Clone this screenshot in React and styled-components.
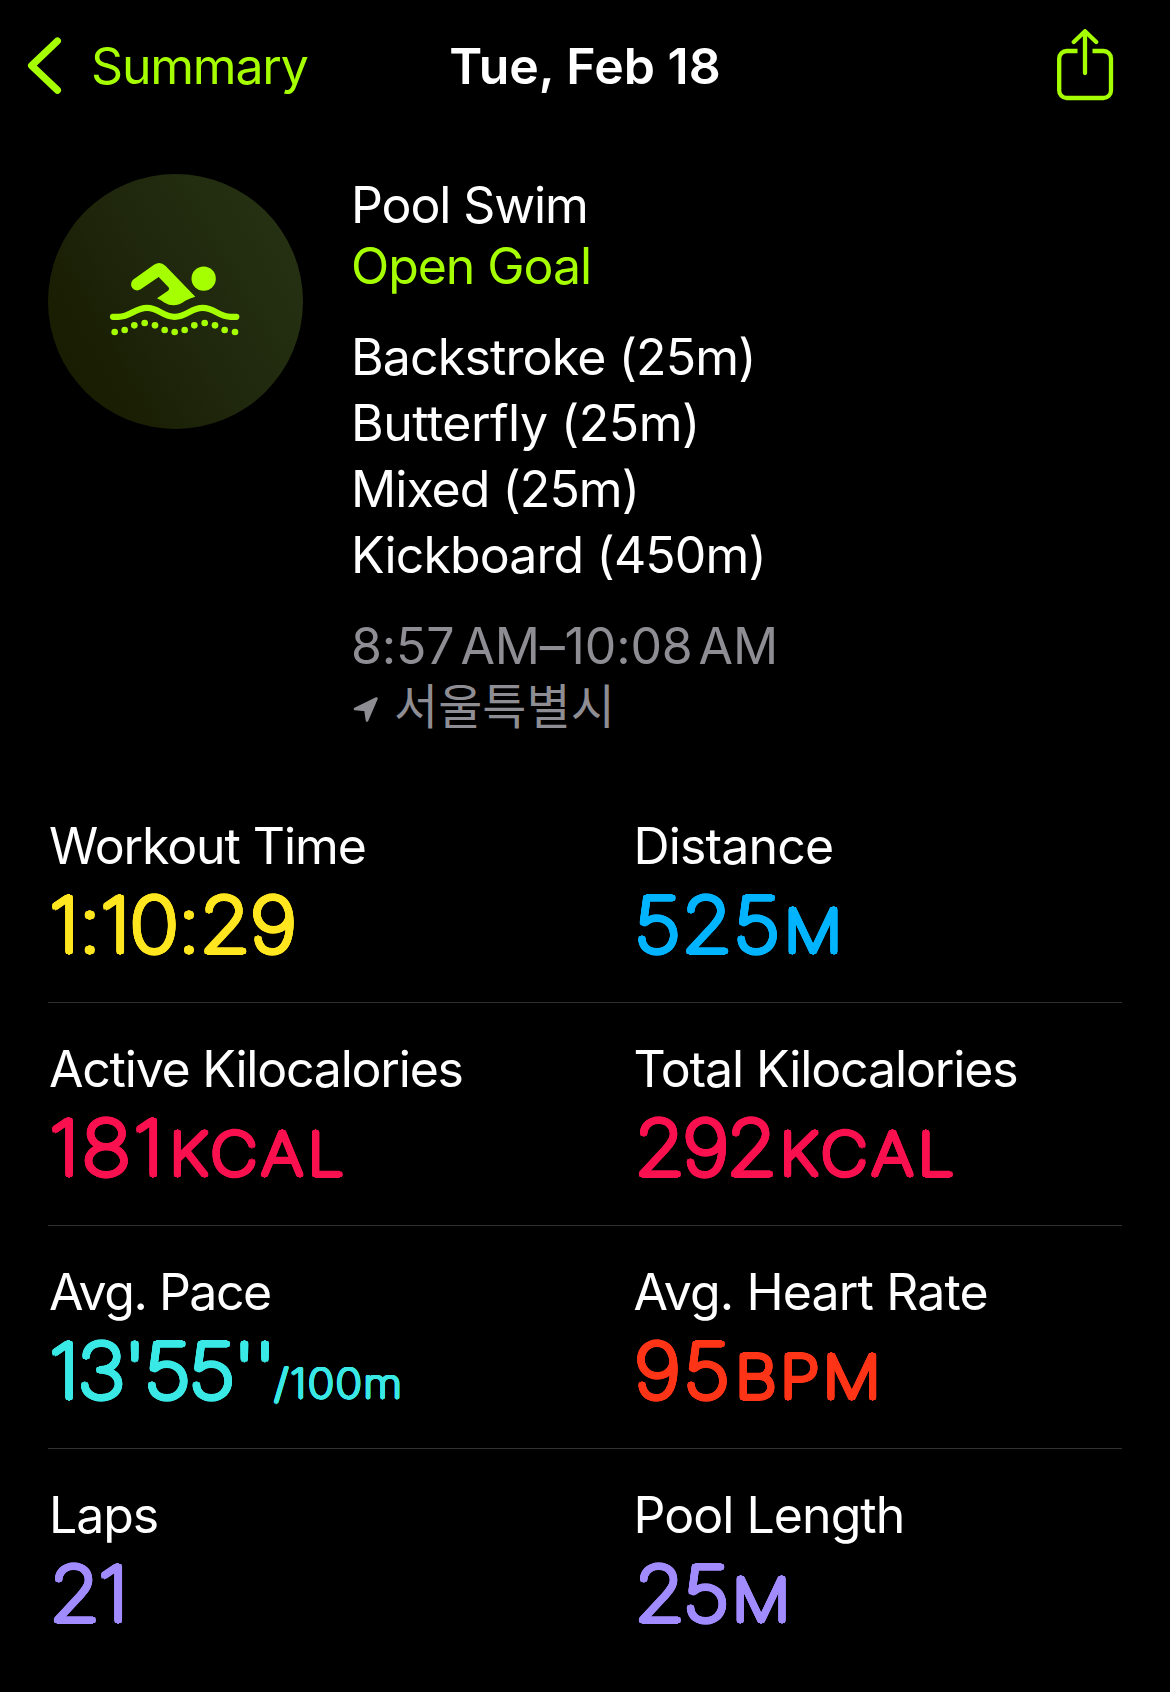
import React from 'react';
import styled, { createGlobalStyle } from 'styled-components';

const GlobalStyle = createGlobalStyle`
  * {
    box-sizing: border-box;
  }
  body {
    margin: 0;
    background-color: #000;
    color: #fff;
    font-family: Inter, 'Noto Sans CJK KR', sans-serif;
    font-size: 50px;
  }
`;

// thickens a hairline weight with a round brush, so the stroke ends come out rounded
const roundStroke = (r) => {
  const ring = (radius, count) =>
    Array.from({ length: count }, (_, i) => {
      const a = (i / count) * Math.PI * 2;
      return `${(Math.cos(a) * radius).toFixed(2)}px ${(Math.sin(a) * radius).toFixed(2)}px 0 currentColor`;
    });
  return [...ring(r, 20), ...ring(r / 2, 8)].join(', ');
};

const Screen = styled.main`
  width: 1170px;
  height: 1692px;
  overflow: hidden;
  background-color: #000;
`;

const Header = styled.header`
  display: grid;
  grid-template-columns: 1fr auto 1fr;
  align-items: center;
  height: 132px;
  padding: 0 56px;
  line-height: 60px;
`;
const BackButton = styled.button`
  display: flex;
  align-items: center;
  gap: 27px;
  margin-left: -30px;
  padding: 0;
  border: none;
  background-color: transparent;
  color: #a6ff00;
  font: inherit;
  letter-spacing: -1.2px;
`;
const Title = styled.h1`
  margin: 0;
  font-size: 50px;
  font-weight: 600;
`;
const ShareButton = styled.button`
  justify-self: end;
  display: flex;
  padding: 0;
  border: none;
  background-color: transparent;
  color: #a6ff00;
`;

const Workout = styled.section`
  display: flex;
  gap: 48px;
  height: 648px;
  padding: 42px 48px 0;
`;
const Badge = styled.div`
  width: 255px;
  height: 255px;
  border-radius: 50%;
  background: linear-gradient(60deg, #181b00 8%, #1f270c 50%, #263213 92%);
  color: #a6ff00;
`;
const Info = styled.div`
  padding-top: 1px;
  line-height: 61px;
`;
const Line = styled.div`
  color: ${(props) => props.$color || '#fff'};
  letter-spacing: ${(props) => props.$track}px;
  white-space: pre;
`;
const Meridiem = styled.span`
  margin-left: -3px;
`;
const Strokes = styled.div`
  margin: 27px 0 28px;
  line-height: 66px;
`;
const Place = styled.div`
  display: flex;
  align-items: center;
  gap: 15px;
  padding-left: 2px;
  color: #8e8d93;
  font-size: 48px;
  line-height: 59px;
  svg {
    margin-top: 5px;
  }
`;

const Stats = styled.section`
  padding: 0 48px;
`;
const StatRow = styled.div`
  display: grid;
  grid-template-columns: 584.5px 1fr;
  padding: 36px 0 33px 1px;
  & + & {
    border-top: 1px solid #303032;
  }
`;
const Label = styled.div`
  line-height: 60px;
  letter-spacing: ${(props) => props.$track}px;
`;
const Value = styled.div`
  margin-top: 5px;
  color: ${(props) => props.$color};
  font-size: 75.4px;
  font-weight: 100;
  line-height: 88px;
  letter-spacing: ${(props) => props.$track}px;
  text-shadow: ${roundStroke(2.6)};
  transform: scaleX(1.1);
  transform-origin: left;
  white-space: nowrap;
`;
const Unit = styled.span`
  margin-left: ${(props) => props.$gap}px;
  font-size: 58.8px;
  line-height: 1;
  letter-spacing: ${(props) => props.$track || 0}px;
`;
const PerUnit = styled(Unit)`
  font-size: 40.5px;
  letter-spacing: 1.3px;
  text-shadow: ${roundStroke(1.5)};
`;

const strokes = [
  { text: 'Backstroke (25m)', track: -0.85 },
  { text: 'Butterfly (25m)', track: -0.5 },
  { text: 'Mixed (25m)', track: -0.95 },
  { text: 'Kickboard (450m)', track: -0.88 },
];

const stats = [
  [
    { label: 'Workout Time', labelTrack: -1.1, value: '1:10:29', track: -0.8, color: '#ffe620' },
    { label: 'Distance', labelTrack: -0.85, value: '525', track: 0.5, unit: 'M', gap: 3.2, color: '#00b4ff' },
  ],
  [
    { label: 'Active Kilocalories', labelTrack: -1.22, value: '181', track: 1.9, unit: 'KCAL', gap: 3.4, unitTrack: 4.3, color: '#fa114f' },
    { label: 'Total Kilocalories', labelTrack: -1.12, value: '292', track: -2.8, unit: 'KCAL', gap: 4.6, unitTrack: 4.3, color: '#fa114f' },
  ],
  [
    { label: 'Avg. Pace', labelTrack: -1.49, value: "13'55''", track: -2, per: '/100m', gap: 0, color: '#3ae9e6' },
    { label: 'Avg. Heart Rate', labelTrack: -0.87, value: '95', track: 2.2, unit: 'BPM', gap: 2.6, unitTrack: 3.2, color: '#ff3518' },
  ],
  [
    { label: 'Laps', labelTrack: -1.1, value: '21', track: -2.2, color: '#a18cff' },
    { label: 'Pool Length', labelTrack: -0.95, value: '25', track: -2.6, unit: 'M', gap: 5.2, color: '#a18cff' },
  ],
];

const dots = [
  [254, 516], [284, 510], [313, 496], [344, 489], [375, 496], [404, 510], [434, 516],
  [464, 510], [493, 496], [524, 489], [555, 496], [584, 510], [615, 516],
];

function ChevronIcon() {
  return (
    <svg width="38" height="60" viewBox="0 0 38 60" fill="none" stroke="currentColor">
      <path d="M31.4 5 5.6 29.6l25.8 24.6" strokeWidth="7.2" strokeLinecap="round" strokeLinejoin="round" />
    </svg>
  );
}

function ShareIcon() {
  return (
    <svg width="58" height="74" viewBox="0 0 58 74" fill="none" stroke="currentColor" strokeWidth="4.3">
      <path d="M21.5 22H10.6a7.4 7.4 0 0 0-7.4 7.4v32.2a7.4 7.4 0 0 0 7.4 7.4h37a7.4 7.4 0 0 0 7.4-7.4V29.4a7.4 7.4 0 0 0-7.4-7.4H36.5" />
      <path d="M29 44V3M17.8 13 29 2.2 40.2 13" strokeLinecap="round" strokeLinejoin="round" />
    </svg>
  );
}

function SwimIcon() {
  return (
    <svg width="255" height="255" viewBox="54 42 765 765" fill="currentColor">
      <path d="M311 358 372 314Q390 302 406 317L496 410Q480 414 466 422Q434 446 404 428Q393 420 381 415L414 392Q420 387 415 381L386 351 332 388A18 18 0 0 1 311 358Z" />
      <circle cx="521" cy="356" r="36.5" />
      <path
        d="M249 470.5H265C302 470.5 315 443.5 351 443.5S398 470.5 434 470.5S482 443.5 518 443.5S566 470.5 602 470.5H619"
        fill="none"
        stroke="currentColor"
        strokeWidth="18.5"
        strokeLinecap="round"
      />
      {dots.map(([x, y]) => (
        <circle key={x} cx={x} cy={y} r="10" />
      ))}
    </svg>
  );
}

function LocationIcon() {
  return (
    <svg width="26" height="27" viewBox="0 0 26 27" fill="currentColor">
      <path
        d="M2 13 23.5 2.5 14 24.5 12.5 14Z"
        stroke="currentColor"
        strokeWidth="2.6"
        strokeLinejoin="round"
      />
    </svg>
  );
}

function Stat({ item }) {
  return (
    <div>
      <Label $track={item.labelTrack}>{item.label}</Label>
      <Value $color={item.color} $track={item.track}>
        {item.value}
        {item.unit && (
          <Unit $gap={item.gap} $track={item.unitTrack}>{item.unit}</Unit>
        )}
        {item.per && <PerUnit $gap={item.gap}>{item.per}</PerUnit>}
      </Value>
    </div>
  );
}

function App() {
  return (
    <Screen>
      <GlobalStyle />
      <Header>
        <BackButton type="button">
          <ChevronIcon />
          Summary
        </BackButton>
        <Title>Tue, Feb 18</Title>
        <ShareButton type="button">
          <ShareIcon />
        </ShareButton>
      </Header>

      <Workout>
        <Badge>
          <SwimIcon />
        </Badge>
        <Info>
          <Line $track={-1.1}>Pool Swim</Line>
          <Line $track={-1.05} $color="#a6ff00">Open Goal</Line>
          <Strokes>
            {strokes.map((stroke) => (
              <Line key={stroke.text} $track={stroke.track}>{stroke.text}</Line>
            ))}
          </Strokes>
          <Line $track={-0.15} $color="#8e8d93">
            {'8:57\u2009'}
            <Meridiem>AM</Meridiem>
            {'–10:08\u2009'}
            <Meridiem>AM</Meridiem>
          </Line>
          <Place>
            <LocationIcon />
            서울특별시
          </Place>
        </Info>
      </Workout>

      <Stats>
        {stats.map((row) => (
          <StatRow key={row[0].label}>
            {row.map((item) => (
              <Stat key={item.label} item={item} />
            ))}
          </StatRow>
        ))}
      </Stats>
    </Screen>
  );
}

export default App;
